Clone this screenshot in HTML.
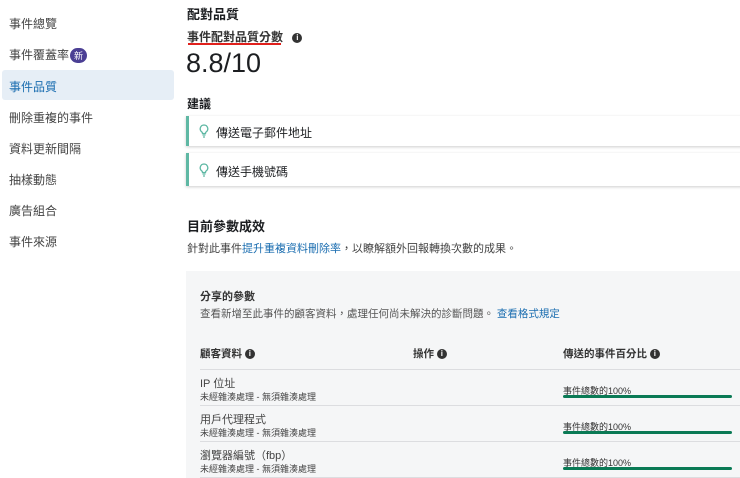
<html><head><style>
body{margin:0;width:740px;height:478px;overflow:hidden;background:#fff;font-family:"Liberation Sans","Noto Sans CJK TC",sans-serif;color:#1c1e21;position:relative}
.a{position:absolute;white-space:nowrap}
.nav{left:9px;font-size:12px;color:#444}
.i{display:inline-block;width:10px;height:10px;border-radius:50%;background:#333;color:#fff;font-size:8px;line-height:10px;text-align:center;font-weight:bold;vertical-align:middle}
.card{position:absolute;left:186px;width:560px;background:#fff;border-left:3px solid #5fb8a4;box-shadow:0 1px 3px rgba(0,0,0,.2);font-size:12px}
.row{position:absolute;left:200px;width:540px;border-top:1px solid #dcdde0}
.bar{position:absolute;left:563px;width:169px;height:3px;background:#0a7a55;border-radius:2px}
.pct{position:absolute;left:563px;font-size:9px;color:#333}
</style></head><body>
<div class="a nav" style="top:15px">事件總覽</div>
<div class="a nav" style="top:46px">事件覆蓋率<span style="display:inline-block;background:#4b3f94;color:#fff;border-radius:8px;font-size:9px;padding:1px 4px;margin-left:1px">新</span></div>
<div class="a" style="left:2px;top:70px;width:172px;height:30px;background:#e6eef6;border-radius:3px"></div>
<div class="a nav" style="top:78px;color:#1a6db0">事件品質</div>
<div class="a nav" style="top:109px">刪除重複的事件</div>
<div class="a nav" style="top:140px">資料更新間隔</div>
<div class="a nav" style="top:171px">抽樣動態</div>
<div class="a nav" style="top:202px">廣告組合</div>
<div class="a nav" style="top:233px">事件來源</div>

<div class="a" style="left:187px;top:4px;font-size:13px;font-weight:bold">配對品質</div>
<div class="a" style="left:187px;top:28px;font-size:12px;font-weight:bold;color:#333">事件配對品質分數 <span class="i" style="margin-left:6px">i</span></div>
<div class="a" style="left:188px;top:43px;width:93px;height:2px;background:#e0201c"></div>
<div class="a" style="left:186px;top:48px;font-size:27px;color:#1c1e21">8.8/10</div>
<div class="a" style="left:187px;top:95px;font-size:12px;font-weight:bold">建議</div>
<div class="card" style="top:116px;height:30px"><svg class="a" style="left:10px;top:8px" width="10" height="14" viewBox="0 0 10 14"><path d="M5 1a3.8 3.8 0 0 0-2.3 6.8c.5.4.8 1 .8 1.7h3c0-.7.3-1.3.8-1.7A3.8 3.8 0 0 0 5 1z" fill="none" stroke="#5fb8a4" stroke-width="1.3"/><path d="M3.5 11h3M4 13h2" stroke="#5fb8a4" stroke-width="1.3"/></svg><span class="a" style="left:27px;top:8px">傳送電子郵件地址</span></div>
<div class="card" style="top:153px;height:33px"><svg class="a" style="left:10px;top:10px" width="10" height="14" viewBox="0 0 10 14"><path d="M5 1a3.8 3.8 0 0 0-2.3 6.8c.5.4.8 1 .8 1.7h3c0-.7.3-1.3.8-1.7A3.8 3.8 0 0 0 5 1z" fill="none" stroke="#5fb8a4" stroke-width="1.3"/><path d="M3.5 11h3M4 13h2" stroke="#5fb8a4" stroke-width="1.3"/></svg><span class="a" style="left:27px;top:10px">傳送手機號碼</span></div>
<div class="a" style="left:187px;top:216px;font-size:13px;font-weight:bold">目前參數成效</div>
<div class="a" style="left:187px;top:240px;font-size:11px;color:#444">針對此事件<span style="color:#1a6db0">提升重複資料刪除率</span>，以瞭解額外回報轉換次數的成果。</div>
<div class="a" style="left:186px;top:271px;width:554px;height:207px;background:#f5f6f7"></div>
<div class="a" style="left:200px;top:288px;font-size:11px;font-weight:bold;color:#333">分享的參數</div>
<div class="a" style="left:200px;top:306px;font-size:10.5px;color:#555">查看新增至此事件的顧客資料，處理任何尚未解決的診斷問題。 <span style="color:#1a6db0">查看格式規定</span></div>
<div class="a" style="left:200px;top:346px;font-size:10.5px;font-weight:bold;color:#333">顧客資料 <span class="i">i</span></div>
<div class="a" style="left:413px;top:346px;font-size:10.5px;font-weight:bold;color:#333">操作 <span class="i">i</span></div>
<div class="a" style="left:563px;top:346px;font-size:10.5px;font-weight:bold;color:#333">傳送的事件百分比 <span class="i">i</span></div>
<div class="row" style="top:369px"></div><div class="row" style="top:405px"></div><div class="row" style="top:441px"></div><div class="row" style="top:477px"></div>
<div class="a" style="left:200px;top:375px;font-size:11px;color:#444">IP 位址</div>
<div class="a" style="left:200px;top:390px;font-size:9px;color:#444">未經雜湊處理 - 無須雜湊處理</div>
<div class="a" style="left:200px;top:411px;font-size:11px;color:#444">用戶代理程式</div>
<div class="a" style="left:200px;top:426px;font-size:9px;color:#444">未經雜湊處理 - 無須雜湊處理</div>
<div class="a" style="left:200px;top:447px;font-size:11px;color:#444">瀏覽器編號（fbp）</div>
<div class="a" style="left:200px;top:462px;font-size:9px;color:#444">未經雜湊處理 - 無須雜湊處理</div>
<div class="pct" style="top:384px">事件總數的100%</div><div class="bar" style="top:395px"></div>
<div class="pct" style="top:420px">事件總數的100%</div><div class="bar" style="top:431px"></div>
<div class="pct" style="top:456px">事件總數的100%</div><div class="bar" style="top:467px"></div>
</body></html>
